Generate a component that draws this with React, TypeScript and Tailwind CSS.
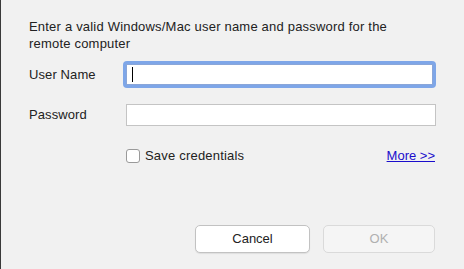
export default function App() {
  return (
    <div
      className="w-[464px] h-[269px] bg-[#f1f1f1] border-l border-[#3a3a3a] text-[13px] text-[#222] flex flex-col"
      style={{ fontFamily: '"Liberation Sans", Arial, sans-serif' }}
    >
      <p className="pl-[28px] pt-[18px] w-[420px] leading-[17px] tracking-[0.2px]">
        Enter a valid Windows/Mac user name and password for the remote computer
      </p>

      <div className="mt-[9px] pl-[28px] pr-[28px] flex items-center">
        <label className="w-[94px] tracking-[0.1px]">User Name</label>
        <div className="flex-1 rounded-[4px] bg-[#7ea6e8] p-[3px]">
          <div className="h-[21px] bg-white border border-[#8aa6d8] flex items-center pl-[5px]">
            <span className="w-px h-[15px] bg-black" />
          </div>
        </div>
      </div>

      <div className="mt-[16px] pl-[28px] pr-[28px] flex items-center">
        <label className="w-[97px] tracking-[0.1px]">Password</label>
        <div className="flex-1 h-[22px] bg-white border border-[#c4c4c4]" />
      </div>

      <div className="mt-[20px] pl-[125px] pr-[29px] flex items-center">
        <span className="w-[14px] h-[14px] rounded-[3px] border border-[#9a9a9a] bg-white" />
        <span className="ml-[5px] tracking-[0.2px]">Save credentials</span>
        <a className="ml-auto text-[#1a0dcc] underline">More &gt;&gt;</a>
      </div>

      <div className="mt-auto mb-[16px] pr-[29px] flex justify-end gap-[13px]">
        <button className="w-[115px] h-[28px] rounded-[5px] bg-white border border-[#c2c2c2] shadow-[0_1px_1px_rgba(0,0,0,0.08)]">
          Cancel
        </button>
        <button className="w-[112px] h-[28px] rounded-[5px] bg-[#f5f5f5] border border-[#dadada] text-[#b0b0b0]" disabled>
          OK
        </button>
      </div>
    </div>
  );
}
